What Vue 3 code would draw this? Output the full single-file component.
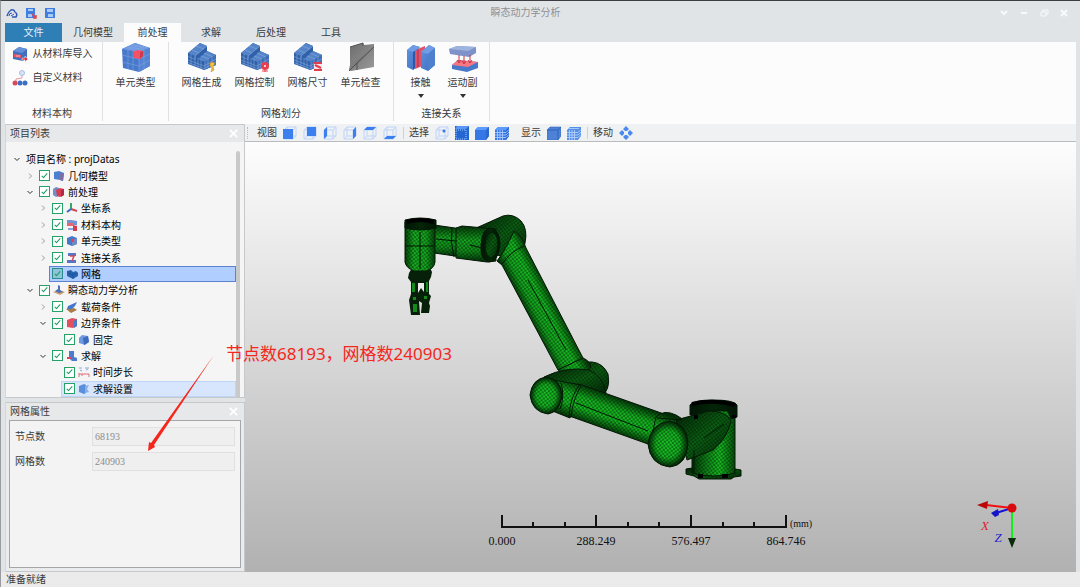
<script setup>
import { ref } from 'vue'

const tabs = ['几何模型', '前处理', '求解', '后处理', '工具']
const activeTab = ref('前处理')

const meshTools = [
  { label: '网格生成', icon: 'mesh-gen' },
  { label: '网格控制', icon: 'mesh-ctl' },
  { label: '网格尺寸', icon: 'mesh-size' },
  { label: '单元检查', icon: 'mesh-check' },
]
const linkTools = [
  { label: '接触', icon: 'contact' },
  { label: '运动副', icon: 'joint' },
]

const faces = {
  front: 'M0 3h10v10h-10z',
  back: 'M4 1h9v9h-9z',
  left: 'M1 4l3-3v9l-3 3z',
  right: 'M10 4l3-3v9l-3 3z',
  top: 'M1 4l3-3h9l-3 3z',
  bottom: 'M1 13l3-3h9l-3 3z',
}
const views = [
  { name: '前视图', face: 'front' },
  { name: '后视图', face: 'back' },
  { name: '左视图', face: 'left' },
  { name: '右视图', face: 'right' },
  { name: '俯视图', face: 'top' },
  { name: '仰视图', face: 'bottom' },
]
const picks = [
  { name: '选择点', icon: 'pick-point' },
  { name: '选择边', icon: 'pick-edge' },
  { name: '选择体', icon: 'pick-solid' },
  { name: '选择网格', icon: 'pick-mesh' },
]
const shows = [
  { name: '显示实体', icon: 'show-solid' },
  { name: '显示网格', icon: 'show-mesh' },
]

const tree = ref([
  { level: 0, label: '项目名称 : projDatas', open: true, root: true },
  { level: 1, label: '几何模型', icon: 't-geo', open: false, checked: true },
  { level: 1, label: '前处理', icon: 't-pre', open: true, checked: true },
  { level: 2, label: '坐标系', icon: 't-axes', open: false, checked: true },
  { level: 2, label: '材料本构', icon: 't-mat', open: false, checked: true },
  { level: 2, label: '单元类型', icon: 't-elem', open: false, checked: true },
  { level: 2, label: '连接关系', icon: 't-link', open: false, checked: true },
  { level: 2, label: '网格', icon: 't-mesh', checked: true, state: 'selected' },
  { level: 1, label: '瞬态动力学分析', icon: 't-dyn', open: true, checked: true },
  { level: 2, label: '载荷条件', icon: 't-load', open: false, checked: true },
  { level: 2, label: '边界条件', icon: 't-bound', open: true, checked: true },
  { level: 3, label: '固定', icon: 't-fix', checked: true },
  { level: 2, label: '求解', icon: 't-solve', open: true, checked: true },
  { level: 3, label: '时间步长', icon: 't-time', checked: true },
  { level: 3, label: '求解设置', icon: 't-set', checked: true, state: 'hover' },
])

const props = [
  { id: 'nodes', label: '节点数', value: '68193' },
  { id: 'cells', label: '网格数', value: '240903' },
]

const parts = [
  { d: 'M474 229L503 216Q513 213 521 221Q528 229 525 243L520 262L494 254Z', fill: 'dim' },
  { d: 'M434 225L462 229V257L434 253Z', fill: 'armA' },
  { d: 'M456 228L462 226L496 229V261L487 262L456 258Z', fill: 'armA' },
  { d: 'M405 222H435V262Q434 269 426 271H414Q406 268 405 262Z', fill: 'headG' },
  { d: 'M405 220Q420 216 436 220V228Q420 232 405 228Z', fill: 'black' },
  { d: 'M497 261Q505 251 514 231Q522 236 526 248L583 358L558 370L502 265Z', fill: 'armB' },
  { d: 'M490 228Q500 229 500 245Q498 262 489 262Q480 260 481 245Q482 229 490 228Z', fill: 'black' },
  { d: 'M492 232Q498 234 498 245Q497 256 491 258Q485 256 485 245Q486 233 492 232Z', fill: 'dim' },
  { d: 'M582 362L592 362Q603 363 608 374Q611 391 600 397L578 392L560 372Z', fill: 'dim' },
  { d: 'M558 370L583 358Q590 361 591 367Q584 378 565 374Z', fill: 'armB' },
  { d: 'M544 377Q566 366 589 370Q603 376 606 393L588 391L552 391Z', fill: 'dim' },
  { d: 'M553 380L582 385L570 418L550 410Z', fill: 'armC' },
  { d: 'M580 384Q570 397 569 416L575 418L648 444L664 414L582 385Z', fill: 'armC' },
  { d: 'M656 417Q664 409 676 415L684 420L668 430L652 435Z', fill: 'armC' },
  { d: 'M546 377Q561 379 562 395Q560 412 548 414Q532 412 530 395Q532 379 546 377Z', fill: 'ball' },
  { d: 'M692 409H735V474Q714 481 692 474Z', fill: 'base' },
  { d: 'M690 405Q693 400 713 400Q734 400 737 405V417L731 419L728 411H705L700 415H690Z', fill: 'black' },
  { d: 'M686 469L692 468V473Q714 479 735 473V469L741 470V476L734 477L731 479H699L694 476L686 474Z', fill: 'dim' },
  { d: 'M676 420L709 411Q726 411 731 421Q727 439 713 450L687 460Z', fill: 'dim' },
  { d: 'M669 421Q687 424 688 443Q687 465 670 467Q650 465 648 444Q650 424 669 421Z', fill: 'ball' },
]

const ticks = [
  { x: 502, label: '0.000' },
  { x: 596, label: '288.249' },
  { x: 691, label: '576.497' },
  { x: 786, label: '864.746' },
]
const minor = [533, 565, 628, 659, 723, 754]
</script>

<template>
  <div class="window">
    <svg class="defs" aria-hidden="true">
      <defs>
        <linearGradient id="blueFace" x1="0" y1="0" x2="1" y2="1">
          <stop offset="0" stop-color="#5f94e0" /><stop offset="1" stop-color="#3c6cc0" />
        </linearGradient>
        <linearGradient id="greyFace" x1="0" y1="0" x2="1" y2="1">
          <stop offset="0" stop-color="#6c6c6c" /><stop offset="1" stop-color="#9a9a9a" />
        </linearGradient>
      </defs>
      <symbol id="stairs" viewBox="0 0 30 30">
        <path d="M1 11L13 1L20 4V9L29 13V23L17 28L1 22Z" fill="#2f60a8" />
        <path d="M1 11L13 1L20 4L8 14ZM11 17L20 9L29 13L18 20Z" fill="#5585c8" />
        <path d="M18 20L29 13V23L17 28Z" fill="#3f6fb8" />
        <path d="M1 14.500L8 17.500V14L20 4M1 18L17 24L29 17M4 12V23M8 14V25M11 16V26M14 17V27M18 20V27M21 18V26M25 16V25M5 8L12 11M9 4L17 7M14 14L22 17M17 11L26 15M29 20L17 26.500L1 20.500" fill="none" stroke="#8fb2e4" stroke-width=".5" />
      </symbol>
      <symbol id="mesh-gen" viewBox="0 0 30 30">
        <use href="#stairs" width="30" height="30" />
        <path d="M23 21L26 20L28 22L26 24L27 28L24 30L25 26L23 24Z" fill="#f0c040" stroke="#b9851a" stroke-width=".5" />
      </symbol>
      <symbol id="mesh-ctl" viewBox="0 0 30 30">
        <use href="#stairs" width="30" height="30" />
        <circle cx="25" cy="24" r="4" fill="#e8404f" /><circle cx="25" cy="24" r="1" fill="#fff" />
        <path d="M25 28V30M22 29H28" stroke="#e8404f" />
      </symbol>
      <symbol id="mesh-size" viewBox="0 0 30 30">
        <use href="#stairs" width="30" height="30" />
        <path d="M21 21H29V29H21Z" fill="#f6e4ea" />
        <path d="M21 21H29M21 28H29M22 23L28 26" fill="none" stroke="#e0404e" stroke-width="2" />
      </symbol>
      <symbol id="mesh-check" viewBox="0 0 30 30">
        <path d="M4 5L17 1L18 3L28 2V25L5 29L3 28L4 23Z" fill="url(#greyFace)" />
        <path d="M28 5L12 22L3 29L5 22Z" fill="#7c7c7c" />
        <path d="M4 5L17 1V4M28 5L11 21L3 29M11 21V28" fill="none" stroke="#505050" />
      </symbol>
      <symbol id="cube-big" viewBox="0 0 30 30">
        <path d="M1 7L14 1L29 6V24L18 30L2 26Z" fill="#4779cb" />
        <path d="M1 7L14 1L29 6L18 10Z" fill="#6f9ae0" /><path d="M18 10L29 6V24L18 30Z" fill="#5584d2" />
        <path d="M1 13L18 17L29 12M1 20L18 24L29 18M7 8V27M12 9V28M18 10V30M23 8V27M6 5L23 8M10 3L26 6M23 4L12 9M18 3L6 8" fill="none" stroke="#84a9e4" stroke-width=".5" />
        <path d="M13 9L17 8L22 9V14L19 17L13 16Z" fill="#f25264" /><path d="M19 10L22 9V14L19 17Z" fill="#d03a50" />
      </symbol>
      <symbol id="contact" viewBox="0 0 30 30">
        <path d="M9 8L19 4V23L9 27Z" fill="#e35166" /><path d="M12 7V25" stroke="#9d3459" />
        <path d="M1 8L7 3L14 5L9 10V26L7 28L1 25Z" fill="url(#blueFace)" /><path d="M1 8L7 3L14 5L7 10Z" fill="#6f9ce4" /><path d="M7 10L9 9V26L7 28Z" fill="#2e57a5" />
        <path d="M15 10L23 3L29 6V23L22 29L15 26Z" fill="url(#blueFace)" /><path d="M15 10L23 3L29 6L22 12Z" fill="#6f9ce4" /><path d="M22 12L29 6V23L22 29Z" fill="#4f80d0" />
      </symbol>
      <symbol id="joint" viewBox="0 0 30 30">
        <path d="M1 7L9 4L28 5V11L21 15L2 12Z" fill="#7e91c8" /><path d="M1 7L9 4L28 5L20 9Z" fill="#9db4e0" />
        <path d="M4 23L10 18L30 20V26L19 30L4 27Z" fill="#4778ca" /><path d="M4 23L10 18L30 20L20 25Z" fill="#f47784" />
        <path d="M11 13V20M16 14V21M22 13V20M9 18L11 21L13 18M14 19L16 22L18 19M20 18L22 21L24 18" fill="none" stroke="#d0303e" stroke-width="1" />
      </symbol>
      <symbol id="library" viewBox="0 0 16 16">
        <path d="M1 5L7 1L15 3V12L11 15L1 13Z" fill="#426fbd" /><path d="M1 5L7 1L15 3L10 7Z" fill="#6690d6" />
        <path d="M2 8L9 9V12L2 11Z" fill="#ee5262" /><path d="M4 10H8" stroke="#f8b0b8" /><path d="M10 12H13V10L16 13L13 16V14H10Z" fill="#e13848" stroke="#fff" stroke-width=".5" />
      </symbol>
      <symbol id="custom" viewBox="0 0 16 16">
        <circle cx="10" cy="3" r="2.500" fill="#d7e4f6" stroke="#a4bfe4" /><path d="M10 6V8L4 9V11" fill="none" stroke="#e89a9e" />
        <circle cx="3" cy="13" r="2.500" fill="#d84959" /><circle cx="8" cy="13" r="2.500" fill="#3d6fc4" /><circle cx="13" cy="13" r="2.500" fill="#3d6fc4" />
      </symbol>

      <symbol id="wire" viewBox="0 0 14 14">
        <path d="M1 4h9v9h-9zM4 1h9v9h-9zM1 4l3-3M10 4l3-3M1 13l3-3M10 13l3-3" fill="none" stroke="#bdd3f9" />
      </symbol>
      <symbol id="solid" viewBox="0 0 14 14">
        <path d="M0 4L3 1H14V10L11 14H0Z" fill="#3578e5" /><path d="M0 4L3 1H14L11 4Z" fill="#5b9bff" /><path d="M11 4L14 1V10L11 14Z" fill="#2b68d2" />
      </symbol>
      <symbol id="pick-point" viewBox="0 0 14 14"><use href="#wire" width="14" height="14" /><circle cx="9" cy="5" r="1.500" fill="#3578e5" /></symbol>
      <symbol id="pick-edge" viewBox="0 0 14 14">
        <path d="M0 0H14V14H0Z" fill="#2467d2" /><path d="M0 3L2 0H14L11 3Z" fill="#5a97f6" /><path d="M1 4H11V13H1Z" fill="none" stroke="#9fc8ff" stroke-dasharray="1 1" />
      </symbol>
      <symbol id="pick-solid" viewBox="0 0 14 14"><use href="#solid" width="14" height="14" /></symbol>
      <symbol id="pick-mesh" viewBox="0 0 14 14">
        <use href="#solid" width="14" height="14" /><path d="M0 6.500H11L14 3.500M0 9H11L14 6M0 11.500H11L14 8.500M2.500 4V14M5 4V14M7.500 4V14" fill="none" stroke="#b4d2ff" stroke-width=".8" />
      </symbol>
      <symbol id="show-solid" viewBox="0 0 14 14">
        <path d="M0 4L3 1H14V10L11 14H0Z" fill="#4d82d8" stroke="#3868bc" stroke-width=".6" /><path d="M0 4H11V14M11 4L14 1" fill="none" stroke="#2c5db2" stroke-width=".8" />
      </symbol>
      <symbol id="show-mesh" viewBox="0 0 14 14">
        <path d="M0 4L3 1H14V10L11 14H0Z" fill="#5490ea" /><path d="M0 6.500H11L14 3.500M0 9H11L14 6M0 11.500H11L14 8.500M2.500 4V14M5 4V14M7.500 4V14M2 2.500H12" fill="none" stroke="#bdd6fd" stroke-width=".8" />
      </symbol>

      <symbol id="t-geo" viewBox="0 0 12 12"><path d="M1 2L6 1L11 3L10 11L7 10L1 9Z" fill="#4d7fd0" /><path d="M7 4L11 3L10 11L7 10Z" fill="#7c6fa8" /></symbol>
      <symbol id="t-pre" viewBox="0 0 12 12"><path d="M0 3L3 1L6 2V10L3 11L0 9Z" fill="#6e8fc8" /><path d="M3 4L7 2L11 3V9L7 11L4 10Z" fill="#d83c50" /><path d="M8 4L11 3V9L8 11Z" fill="#a82b48" /></symbol>
      <symbol id="t-axes" viewBox="0 0 12 12"><path d="M5 1V7" stroke="#36a860" stroke-width="2" /><path d="M5 7L11 9" stroke="#d04a50" stroke-width="2" /><path d="M5 7L1 10" stroke="#3b68c8" stroke-width="2" /></symbol>
      <symbol id="t-mat" viewBox="0 0 12 12"><path d="M1 1H5L11 2V6H1Z" fill="#7294d2" /><path d="M1 4H7V7H1Z" fill="#e66672" /><path d="M2 9H7V11H2Z" fill="#8aa6dc" /><path d="M7 6L11 7V12H7Z" fill="#d63c50" /></symbol>
      <symbol id="t-elem" viewBox="0 0 12 12"><path d="M1 3L6 1L11 3V9L6 11L1 9Z" fill="#4778c8" /><path d="M6 5L11 3V9L6 11Z" fill="#6c8ac8" /><path d="M5 4H8V7H5Z" fill="#de4458" /></symbol>
      <symbol id="t-link" viewBox="0 0 12 12"><path d="M2 1H10V4H2ZM1 8H10V11H1Z" fill="#5279c8" /><path d="M4 4H8L6 9" fill="none" stroke="#d84458" stroke-width="1.500" /></symbol>
      <symbol id="t-mesh" viewBox="0 0 12 12"><path d="M1 3L5 2L7 4L10 3L12 5V8L7 11L1 8Z" fill="#2864b0" /><path d="M1 5L7 7L12 5M4 3V9M7 5V11" fill="none" stroke="#1b4d92" stroke-width=".6" /></symbol>
      <symbol id="t-dyn" viewBox="0 0 12 12"><path d="M0 8L6 6L12 8L7 11Z" fill="#caa070" /><path d="M5 1L7 2V6L10 8L6 9L2 7L5 5Z" fill="#4d70b8" /></symbol>
      <symbol id="t-load" viewBox="0 0 12 12"><path d="M0 8L8 7L11 9L5 12Z" fill="#a87c48" /><path d="M2 5L11 1L9 5L6 8L1 8Z" fill="#4478d0" /></symbol>
      <symbol id="t-bound" viewBox="0 0 12 12"><path d="M1 3L6 1L11 2V9L7 11L1 10Z" fill="#e05060" /><path d="M8 4L11 2V9L8 11Z" fill="#4c78c8" /></symbol>
      <symbol id="t-fix" viewBox="0 0 12 12"><path d="M1 4L4 1L10 2L11 8L7 11L1 9Z" fill="#6e98e0" /><path d="M5 4L10 2L11 8L6 11Z" fill="#3e6cbc" /></symbol>
      <symbol id="t-solve" viewBox="0 0 12 12"><path d="M3 1H8V7L11 8V11H6L3 8Z" fill="#4d7cce" /><path d="M1 8H5" stroke="#d84458" stroke-width="2" /></symbol>
      <symbol id="t-time" viewBox="0 0 12 12"><path d="M1 2H4M7 2H11M2 4L4 5M8 4L10 3" stroke="#88a8da" /><path d="M1 7V11M1 8H11V11M4 8V10" fill="none" stroke="#d8707c" /></symbol>
      <symbol id="t-set" viewBox="0 0 12 12"><path d="M1 3L6 1L8 2V10L6 11L1 9Z" fill="#5b8fdc" /><path d="M7 3L11 2L9 6L11 9L7 10Z" fill="#86aee8" /></symbol>
    </svg>

    <header class="titlebar">
      <div class="quick">
        <button type="button" aria-label="主页">
          <svg viewBox="0 0 12 12"><path d="M1 9Q2 5 5 3Q8 2 9 5Q12 7 10 10H6" fill="none" stroke="#3157b5" stroke-width="1.500" /><path d="M3 9Q3 6 6 6M5 9L8 7" fill="none" stroke="#3157b5" /></svg>
        </button>
        <button type="button" aria-label="另存为">
          <svg viewBox="0 0 12 12"><path d="M1 1H10V11H1Z" fill="#3f7de0" /><path d="M3 2H8V4H3ZM3 7H7V10H3Z" fill="#a9c9f8" /><path d="M7 7L11 11M11 8V11H8" fill="none" stroke="#e2444e" stroke-width="1.500" /></svg>
        </button>
        <button type="button" aria-label="保存">
          <svg viewBox="0 0 12 12"><path d="M1 1H11V11H1Z" fill="#3f7de0" /><path d="M3 2H9V5H3ZM4 7H9V10H4Z" fill="#a9c9f8" /></svg>
        </button>
      </div>
      <h1>瞬态动力学分析</h1>
      <div class="controls">
        <button type="button" aria-label="展开"><svg viewBox="0 0 10 10"><path d="M2 3L5 6L8 3" /></svg></button>
        <button type="button" aria-label="最小化"><svg viewBox="0 0 10 10"><path d="M2 5H8" /></svg></button>
        <button type="button" aria-label="还原"><svg class="fine" viewBox="0 0 10 10"><path d="M2 4H7V8H2ZM4 4V2H9V6H7" /></svg></button>
        <button type="button" aria-label="关闭"><svg viewBox="0 0 10 10"><path d="M2 2L8 8M8 2L2 8" /></svg></button>
      </div>
    </header>

    <nav class="tabs">
      <button type="button" class="file">文件</button>
      <button v-for="t in tabs" :key="t" type="button" :class="{ active: t === activeTab }" @click="activeTab = t">{{ t }}</button>
    </nav>

    <section class="ribbon">
      <div class="group material">
        <div class="lines">
          <button type="button" class="line"><svg><use href="#library" /></svg>从材料库导入</button>
          <button type="button" class="line"><svg><use href="#custom" /></svg>自定义材料</button>
        </div>
        <span class="caption">材料本构</span>
      </div>
      <div class="group element">
        <div class="tools">
          <button type="button" class="tool"><svg><use href="#cube-big" /></svg>单元类型</button>
        </div>
      </div>
      <div class="group meshing">
        <div class="tools">
          <button v-for="t in meshTools" :key="t.label" type="button" class="tool"><svg><use :href="'#' + t.icon" /></svg>{{ t.label }}</button>
        </div>
        <span class="caption">网格划分</span>
      </div>
      <div class="group links">
        <div class="tools">
          <button v-for="t in linkTools" :key="t.label" type="button" class="tool narrow"><svg><use :href="'#' + t.icon" /></svg>{{ t.label }}<i class="drop"></i></button>
        </div>
        <span class="caption">连接关系</span>
      </div>
    </section>

    <main class="body">
      <aside class="side">
        <section class="panel">
          <div class="panel-head"><h2>项目列表</h2>
            <button type="button" aria-label="关闭项目列表"><svg viewBox="0 0 10 10"><path d="M1 1L9 9M9 1L1 9" /></svg></button>
          </div>
          <div class="tree-wrap">
            <ul class="tree">
              <li v-for="n in tree" :key="n.label" :class="'lv' + n.level">
                <button v-if="n.open !== undefined" type="button" class="twist" :class="{ open: n.open }" :aria-label="'展开 ' + n.label">
                  <svg viewBox="0 0 8 8"><path :d="n.open ? 'M1.500 3L4 5.500L6.500 3' : 'M3 1.500L5.500 4L3 6.500'" /></svg>
                </button>
                <span v-else class="twist"></span>
                <span v-if="n.root" class="item">{{ n.label }}</span>
                <label v-else class="item" :class="n.state">
                  <input v-model="n.checked" type="checkbox" />
                  <svg><use :href="'#' + n.icon" /></svg>{{ n.label }}
                </label>
              </li>
            </ul>
            <div class="thumb"></div>
          </div>
        </section>
        <section class="panel grow">
          <div class="panel-head"><h2>网格属性</h2>
            <button type="button" aria-label="关闭网格属性"><svg viewBox="0 0 10 10"><path d="M1 1L9 9M9 1L1 9" /></svg></button>
          </div>
          <form class="props">
            <template v-for="p in props" :key="p.id">
              <label :for="p.id">{{ p.label }}</label>
              <input :id="p.id" type="text" :value="p.value" disabled />
            </template>
          </form>
        </section>
      </aside>

      <section class="stage">
        <div class="toolbar">
          <i class="grip"></i>
          <span class="name">视图</span>
          <div class="set">
            <button v-for="v in views" :key="v.face" type="button" :aria-label="v.name">
              <svg viewBox="0 0 14 14"><use href="#wire" width="14" height="14" /><path :d="faces[v.face]" fill="#3b80ee" /></svg>
            </button>
          </div>
          <i class="sep"></i>
          <span class="name">选择</span>
          <div class="set">
            <button v-for="p in picks" :key="p.icon" type="button" :aria-label="p.name"><svg><use :href="'#' + p.icon" /></svg></button>
          </div>
          <span class="name spaced">显示</span>
          <div class="set">
            <button v-for="s in shows" :key="s.icon" type="button" :aria-label="s.name"><svg><use :href="'#' + s.icon" /></svg></button>
          </div>
          <i class="sep"></i>
          <span class="name">移动</span>
          <div class="set">
            <button type="button" aria-label="移动视图">
              <svg viewBox="0 0 14 14"><path d="M7 0L10 3L8 5H6L4 3ZM7 14L10 11L8 9H6L4 11ZM0 7L3 4L5 6V8L3 10ZM14 7L11 4L9 6V8L11 10Z" fill="#4a8af0" /></svg>
            </button>
          </div>
        </div>

        <div class="canvas">
          <svg viewBox="245 142 831 430" role="img" aria-label="机械臂网格模型">
            <defs>
              <pattern id="mesh" width="4" height="4" patternUnits="userSpaceOnUse" patternTransform="rotate(8)">
                <path d="M0 1H4M0 3H4" fill="none" stroke="#001a02" stroke-opacity=".6" stroke-width=".7" />
                <path d="M0 1L2 3L4 1M2 3L0 5M2 3L4 5M0 1L2 -1L4 1" fill="none" stroke="#001a02" stroke-opacity=".65" stroke-width=".7" />
              </pattern>
              <linearGradient id="headG"><stop offset="0" stop-color="#064c09" /><stop offset=".3" stop-color="#1ed32a" /><stop offset=".7" stop-color="#1ccc27" /><stop offset="1" stop-color="#064c09" /></linearGradient>
              <linearGradient id="base"><stop offset="0" stop-color="#053b08" /><stop offset=".35" stop-color="#15a01e" /><stop offset=".65" stop-color="#1ce629" /><stop offset="1" stop-color="#075c0c" /></linearGradient>
              <linearGradient id="armA" x2="0" y2="1"><stop offset="0" stop-color="#053b08" /><stop offset=".4" stop-color="#1cc828" /><stop offset=".7" stop-color="#16aa20" /><stop offset="1" stop-color="#04300a" /></linearGradient>
              <linearGradient id="armB" gradientUnits="userSpaceOnUse" x1="527" y1="317" x2="556" y2="302"><stop offset="0" stop-color="#052f07" /><stop offset=".3" stop-color="#19c725" /><stop offset=".65" stop-color="#1ce229" /><stop offset="1" stop-color="#06430a" /></linearGradient>
              <linearGradient id="armC" gradientUnits="userSpaceOnUse" x1="623" y1="399" x2="611" y2="432"><stop offset="0" stop-color="#053808" /><stop offset=".35" stop-color="#1ad827" /><stop offset=".65" stop-color="#1ce229" /><stop offset="1" stop-color="#053808" /></linearGradient>
              <linearGradient id="dim" x2="1" y2="1"><stop offset="0" stop-color="#042506" /><stop offset=".5" stop-color="#0f7017" /><stop offset="1" stop-color="#042c07" /></linearGradient>
              <linearGradient id="black"><stop offset="0" stop-color="#021104" /><stop offset=".5" stop-color="#062b09" /><stop offset="1" stop-color="#021104" /></linearGradient>
              <radialGradient id="ball"><stop offset="0" stop-color="#20f02e" /><stop offset=".6" stop-color="#1bd728" /><stop offset="1" stop-color="#032006" /></radialGradient>
            </defs>

            <g class="gripper">
              <path d="M412 268H430L432 272L431 277L429 281V294L431 296L429 303L430 306L429 313H421L422 303L419 301L420 315H411L409 300L411 294V282L408 278L409 273Z" fill="#06200a" />
              <path d="M418 283H424V292L421 288L418 293Z" fill="#ececec" />
              <path d="M412 283H415V292H412ZM426 282H428V292H426ZM413 304H417V312H413ZM413 297H416V300H413ZM424 296H427V299H424Z" fill="#148a1c" />
            </g>
            <g v-for="(p, i) in parts" :key="i">
              <path :d="p.d" :fill="'url(#' + p.fill + ')'" />
              <path :d="p.d" fill="url(#mesh)" stroke="#051807" stroke-width="1" />
            </g>
            <g class="seams">
              <path d="M420 232V269M436 239L456 241M405 246H434M452 228Q450 243 454 257M470 245L482 248M528 280L566 350M576 403L648 431M581 386Q573 399 571 417M657 418L682 420M502 264Q510 252 524 246" />
              <path d="M561 383Q565 397 560 409M704 438L724 424M694 450V472" />
            </g>
            <path d="M407 222Q420 218 434 222M692 404Q713 399 735 405M696 415V419M734 415V418M698 476H703M722 476H728" fill="none" stroke="#000" stroke-width="4" />

            <g class="ruler">
              <path d="M501 527H787" />
              <path v-for="t in ticks" :key="t.x" :d="'M' + t.x + ' 515V527'" />
              <path v-for="x in minor" :key="x" :d="'M' + x + ' 522V527'" />
              <text v-for="t in ticks" :key="t.label" :x="t.x" y="545">{{ t.label }}</text>
              <text x="801" y="527" class="unit">(mm)</text>
            </g>

            <g class="triad">
              <path d="M1012 508V540" stroke="#10f018" stroke-width="2" /><path d="M1008 538H1016L1012 548Z" fill="#082c0a" />
              <path d="M1012 508L996 513" stroke="#1414d8" stroke-width="2" /><path d="M998 509L991 513L995 517L999 515Z" fill="#1414c8" />
              <path d="M1012 508L986 505" stroke="#f01010" stroke-width="2" /><path d="M988 501L977 505L987 509Z" fill="#b80808" />
              <circle cx="1012" cy="508" r="4.500" fill="#d80c0c" />
              <text x="985" y="530" class="ax">X</text>
              <text x="998" y="542" class="az">Z</text>
            </g>
          </svg>
        </div>
      </section>
    </main>

    <footer class="status">准备就绪</footer>

    <div class="note">节点数68193，网格数240903</div>
    <svg class="pointer" viewBox="0 0 68 98" aria-hidden="true"><path d="M67 1L7 91L8 93L1 97L2 88L4 89Z" fill="#f5261c" /></svg>
  </div>
</template>

<style>
html, body { margin: 0; }
</style>

<style scoped>
.window {
  position: relative;
  box-sizing: border-box;
  display: flex;
  flex-direction: column;
  min-height: 100vh;
  padding: 0 4px 0 4px;
  background: #e1e4e7;
  border-top: 1px solid #3c3e42;
  border-left: 1px solid #999b9e;
  border-bottom: 1px solid #a2a3a5;
  font: 10px/14px "Liberation Sans", "Noto Sans CJK SC", sans-serif;
  color: #3a3a3a;
}
.defs { position: absolute; width: 0; height: 0; }
button {
  display: flex;
  align-items: center;
  justify-content: center;
  margin: 0;
  padding: 0;
  border: 0;
  background: none;
  font: inherit;
  color: inherit;
}
h1, h2 { margin: 0; font: inherit; }
svg { display: block; }

.titlebar { display: flex; align-items: center; box-sizing: border-box; height: 22px; padding-top: 2px; }
.quick { display: flex; gap: 7px; padding-left: 1px; }
.quick svg { width: 12px; height: 12px; }
.titlebar h1 { flex: 1; padding-right: 4px; text-align: center; color: #8d9093; }
.controls { display: flex; gap: 10px; padding-right: 7px; }
.controls svg { width: 10px; height: 10px; fill: none; stroke: #f8f9fa; stroke-width: 2; }
.controls svg.fine { stroke-width: 1; }

.tabs { display: flex; height: 19px; }
.tabs button { width: 60px; }
.tabs .file { width: 57px; background: #2f7fb7; color: #e8f2fa; }
.tabs .file + button { width: 62px; }
.tabs .active { width: 57px; background: #fcfcfd; }

.ribbon { display: flex; height: 82px; background: #fcfcfd; }
.group {
  display: flex;
  flex-direction: column;
  align-items: center;
  justify-content: space-between;
  box-sizing: border-box;
  margin-bottom: 3px;
  border-right: 1px solid #dfe1e3;
}
.caption { line-height: 14px; }
.material { width: 98px; padding-right: 3px; }
.element { width: 66px; }
.meshing { width: 225px; }
.links { width: 96px; }
.lines { display: flex; flex-direction: column; gap: 8px; padding-top: 4px; }
.line { justify-content: flex-start; gap: 5px; height: 16px; }
.line svg { width: 16px; height: 16px; }
.tools { display: flex; }
.tool { flex-direction: column; justify-content: flex-start; width: 53px; }
.tool.narrow { width: 42px; }
.tool svg { width: 30px; height: 30px; margin-bottom: 4px; }
.drop { width: 0; height: 0; margin-top: 4px; border: 3px solid transparent; border-top: 4px solid #333; border-bottom: 0; }

.body { flex: 1; display: flex; min-height: 0; }
.side { display: flex; flex-direction: column; gap: 4px; width: 240px; box-sizing: border-box; }
.panel { border: 1px solid #c6c8ca; border-left-color: #d4d6d8; background: #f5f5f5; }
.panel-head { display: flex; align-items: center; justify-content: space-between; height: 17px; padding: 0 6px 0 4px; background: #e6e8ea; }
.panel-head svg { width: 9px; height: 9px; fill: none; stroke: #fff; stroke-width: 2; }
.tree-wrap { display: flex; padding: 9px 4px 0 5px; }
.tree {
  flex: 1;
  display: grid;
  grid-template-rows: repeat(15, 1fr);
  height: 246px;
  margin: 0;
  padding: 0;
  list-style: none;
  color: #000;
  font-family: "Noto Sans", "Noto Sans CJK SC", sans-serif;
}
.tree li { display: flex; align-items: stretch; }
.lv1 { padding-left: 13px; }
.lv2 { padding-left: 26px; }
.lv3 { padding-left: 38px; }
.twist { width: 12px; flex: none; }
.twist svg { width: 8px; height: 8px; fill: none; stroke: #9a9a9a; stroke-width: 1; }
.twist.open svg { stroke: #333; }
.item { flex: 1; display: flex; align-items: center; gap: 3px; padding-left: 2px; border: 1px solid transparent; box-sizing: border-box; white-space: nowrap; }
.item svg { width: 12px; height: 12px; }
.item input {
  appearance: none;
  display: grid;
  place-items: center;
  box-sizing: border-box;
  width: 11px;
  height: 11px;
  margin: 0;
  border: 1px solid #26a269;
  background: #fff;
}
.item input:checked::after {
  content: "";
  width: 2px;
  height: 5px;
  margin-bottom: 2px;
  border: solid #1c9c60;
  border-width: 0 1px 1px 0;
  transform: rotate(42deg);
}
.selected { background: #b0ceff; border-color: #5d82d2; }
.selected input { background: #8fc3d8; border-color: #2a8c8c; }
.hover { background: #d8e6fd; border-color: #bfd5f6; }
.thumb { width: 4px; border-radius: 2px 2px 0 0; background: #c9c9c9; }

.grow { flex: 1; display: flex; flex-direction: column; background: #e9ebed; }
.props {
  flex: 1;
  display: grid;
  grid-template-columns: 77px 1fr;
  grid-auto-rows: 19px;
  align-content: start;
  align-items: center;
  row-gap: 6px;
  margin: 0 3px 3px;
  padding: 6px 5px;
  border: 1px solid #a4a6a8;
  background: #f3f3f3;
}
.props input {
  box-sizing: border-box;
  width: 100%;
  height: 19px;
  padding: 0 2px;
  border: 1px solid #e0e0e0;
  background: #efefef;
  color: #8c8c8c;
  font: 10px/17px "Liberation Serif", serif;
}

.stage { flex: 1; min-width: 0; display: flex; flex-direction: column; }
.toolbar { display: flex; align-items: center; height: 17px; background: #f0f1f2; border-bottom: 1px solid #b9bbbd; }
.grip { width: 2px; height: 12px; margin: 0 7px 0 2px; border-left: 1px dotted #bbb; }
.set { display: flex; gap: 6px; padding: 0 6px; }
.set svg { width: 14px; height: 14px; }
.sep { width: 1px; height: 12px; margin-right: 5px; background: #cfd1d3; }
.spaced { margin-left: 6px; }
.canvas { flex: 1; min-height: 0; background: linear-gradient(#fdfdfd, #b1b1b1); overflow: hidden; }
.canvas svg { width: 100%; height: auto; }
.seams { fill: none; stroke: #021604; stroke-width: 1; }
.ruler { fill: none; stroke: #111; stroke-width: 2; }
.ruler text { fill: #111; stroke: none; font: 12px "Liberation Serif", serif; text-anchor: middle; }
.ruler .unit { font-size: 10px; }
.triad text { font: italic 13px "Liberation Serif", serif; text-anchor: middle; }
.triad .ax { fill: #e02030; }
.triad .az { fill: #2424d0; }

.status { height: 15px; margin: 0 -4px; padding-left: 5px; background: #ebebec; line-height: 15px; }

.note {
  position: absolute;
  left: 225px;
  top: 341px;
  color: #f5261c;
  font: 17px/24px "Noto Sans", "Noto Sans CJK SC", sans-serif;
  white-space: nowrap;
}
.pointer { position: absolute; left: 146px; top: 353px; width: 68px; height: 98px; pointer-events: none; }
</style>
